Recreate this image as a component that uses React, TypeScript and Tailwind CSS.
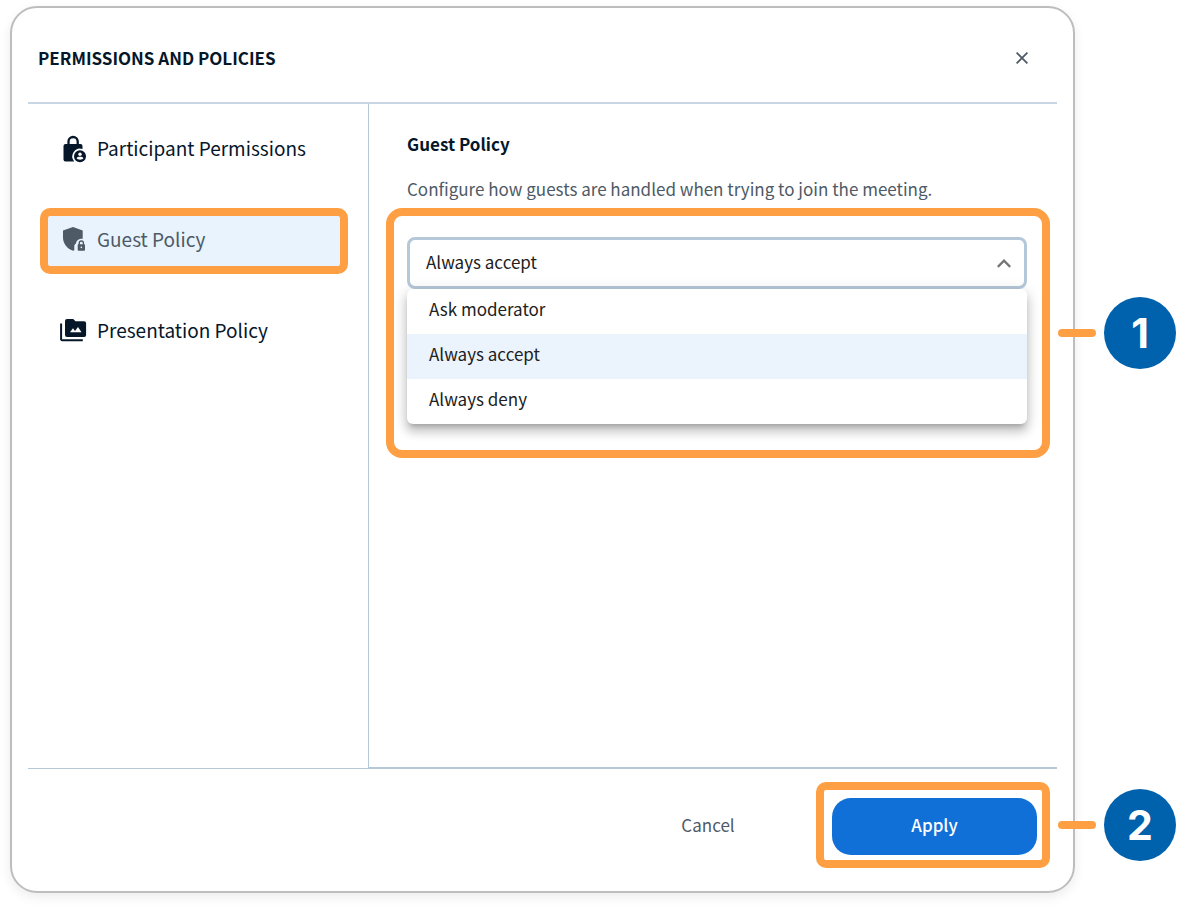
import { useState } from "react";

const OPTIONS = ["Ask moderator", "Always accept", "Always deny"];

function LockPersonIcon() {
  return (
    <svg viewBox="0 0 28 28" className="size-7 shrink-0" aria-hidden="true">
      <path d="M8.5 10V6.6a4.6 4.6 0 0 1 9.2 0V10" fill="none" stroke="currentColor" strokeWidth="2.3" />
      <path
        d="M5.5 9h15a2 2 0 0 1 2 2v3.1A7.7 7.7 0 0 0 14.2 26.4H5.5a2 2 0 0 1-2-2V11a2 2 0 0 1 2-2Z"
        fill="currentColor"
      />
      <circle cx="20" cy="21.2" r="6" fill="currentColor" />
      <circle cx="20" cy="19.2" r="1.7" fill="#fff" />
      <path d="M16.6 23.3c.5-1.3 1.9-1.6 3.4-1.6s2.9.3 3.4 1.6c-.8 1-2 1.4-3.4 1.4s-2.6-.4-3.4-1.4Z" fill="#fff" />
    </svg>
  );
}

function ShieldLockIcon() {
  return (
    <svg viewBox="0 0 28 28" className="size-7 shrink-0" aria-hidden="true">
      <path
        d="M13 1l9.7 3.6v8.1c-3.6-.2-6.5 1.6-6.7 4.7-1.1.6-1.7 1.5-1.7 2.7v4.1c-.4.2-.8.4-1.3.5C7 22.8 3 17.4 3 11.5V4.6Z"
        fill="currentColor"
      />
      <path d="M19.3 19v-1.9a2.05 2.05 0 0 1 4.1 0V19" fill="none" stroke="currentColor" strokeWidth="1.4" />
      <rect x="17.7" y="18.2" width="7.3" height="6.5" rx="0.9" fill="currentColor" />
      <circle cx="21.35" cy="21.4" r="0.8" fill="#e8f3fd" />
    </svg>
  );
}

function FolderPictureIcon() {
  return (
    <svg viewBox="0 0 28 28" className="size-7 shrink-0" aria-hidden="true">
      <path d="M1.1 6.5v15.7a1 1 0 0 0 1 1h20.7" fill="none" stroke="currentColor" strokeWidth="2" />
      <path
        d="M7 2h6.2l2.3 2.3h8.6a2 2 0 0 1 2 2v11.7a2 2 0 0 1-2 2H7a2 2 0 0 1-2-2V4a2 2 0 0 1 2-2Z"
        fill="currentColor"
      />
      <path d="M10 15.2l3-4 2 2.7 3-3.9 3.5 5.2Z" fill="#fff" />
    </svg>
  );
}

function Callout({ step }: { step: number }) {
  return (
    <div className="absolute top-1/2 left-full ml-4 flex -translate-y-1/2 items-center gap-2">
      <span className="h-2 w-[38px] rounded-full bg-[#ff9f43]" />
      <span className="flex size-[72px] items-center justify-center rounded-full bg-[#0061ad] font-['Inter',sans-serif] text-[41px] leading-none font-bold text-white">
        {step}
      </span>
    </div>
  );
}

const NAV = [
  { label: "Participant Permissions", Icon: LockPersonIcon },
  { label: "Guest Policy", Icon: ShieldLockIcon },
  { label: "Presentation Policy", Icon: FolderPictureIcon },
];

export default function App() {
  const [policy, setPolicy] = useState("Always accept");

  return (
    <main className="bg-white pt-[6px] pr-[120px] pb-[15px] pl-[10px] font-['Noto_Sans_CJK_SC',sans-serif] text-[17px] leading-6 text-[#06172a]">
      <div className="rounded-[27px] border-2 border-[#bdbdbd] px-4 shadow-[0_4px_12px_rgba(0,0,0,0.08)]">
        <header className="flex h-24 items-center justify-between border-b-2 border-[#c9d7e5] pt-[6px] pr-6 pl-[10px]">
          <h1 className="font-bold">PERMISSIONS AND POLICIES</h1>
          <button type="button" aria-label="Close" className="flex size-[22px] items-center justify-center text-[#4e5a66]">
            <svg viewBox="0 0 12 12" className="size-3" fill="none" stroke="currentColor" strokeWidth="1.8" aria-hidden="true">
              <path d="M.6.6l10.8 10.8M11.4.6L.6 11.4" />
            </svg>
          </button>
        </header>

        <div className="flex min-h-[665px]">
          <nav className="flex w-[340px] shrink-0 flex-col gap-[25px] border-b border-[#b5c8da] pt-[13px] pr-5 pl-3">
            {NAV.map(({ label, Icon }) => (
              <button
                key={label}
                type="button"
                className={
                  label === "Guest Policy"
                    ? "flex h-[66px] items-center gap-[9px] rounded-[10px] border-8 border-[#ff9f43] bg-[#e8f3fd] pb-0.5 pl-3 text-[19px] text-[#4e5a66]"
                    : "flex h-[66px] items-center gap-[9px] border-8 border-transparent pb-0.5 pl-3 text-[19px]"
                }
              >
                <Icon />
                <span className="pb-[3px]">{label}</span>
              </button>
            ))}
          </nav>

          <section className="grow border-b-2 border-l border-b-[#b5c8da] border-l-[#b5c8da] pt-7 pr-[7px] pl-[17px]">
            <h2 className="px-[21px] font-bold">Guest Policy</h2>
            <label htmlFor="policy" className="mt-[21px] block px-[21px] text-[#4e5a66]">
              Configure how guests are handled when trying to join the meeting.
            </label>
            <div className="relative mt-[7px] rounded-2xl border-8 border-[#ff9f43] pt-[21px] pr-[15px] pb-[26px] pl-[13px]">
              <div className="relative">
                <select
                  id="policy"
                  value={policy}
                  onChange={(e) => setPolicy(e.target.value)}
                  className="block h-[52px] w-full appearance-none rounded-lg border-3 border-[#b5c8da] bg-white pb-0.5 pl-4 text-[#212121]"
                >
                  {OPTIONS.map((o) => (
                    <option key={o}>{o}</option>
                  ))}
                </select>
                <svg
                  viewBox="0 0 14 9"
                  className="pointer-events-none absolute top-[22px] right-4 h-[9px] w-[14px]"
                  fill="none"
                  stroke="#757575"
                  strokeWidth="2.3"
                  aria-hidden="true"
                >
                  <path d="M.8 7.9L7 1.7l6.2 6.2" />
                </svg>
              </div>
              <ul
                role="listbox"
                aria-label="Guest policy options"
                className="relative overflow-hidden rounded-md bg-white text-[#212121] shadow-[0_5px_5px_-3px_rgba(0,0,0,0.2),0_8px_10px_1px_rgba(0,0,0,0.14),0_3px_14px_2px_rgba(0,0,0,0.12)]"
              >
                {OPTIONS.map((o) => (
                  <li
                    key={o}
                    role="option"
                    aria-selected={o === policy}
                    onClick={() => setPolicy(o)}
                    className={
                      o === policy
                        ? "flex h-[45px] items-center bg-[#ebf3fc] px-[22px] pb-[5px]"
                        : "flex h-[45px] items-center px-[22px] pb-[5px]"
                    }
                  >
                    {o}
                  </li>
                ))}
              </ul>
              <Callout step={1} />
            </div>
          </section>
        </div>

        <footer className="flex items-start justify-end pt-[13px] pr-[7px] pb-[23px]">
          <button type="button" className="mr-6 h-[86px] w-[168px] text-[#4e5a66]">
            Cancel
          </button>
          <div className="relative rounded-[10px] border-8 border-[#ff9f43] pt-2 pr-[5px] pb-[5px] pl-2">
            <button type="button" className="h-[57px] w-[205px] rounded-[19px] bg-[#1070d7] pb-1 font-medium text-white">
              Apply
            </button>
            <Callout step={2} />
          </div>
        </footer>
      </div>
    </main>
  );
}
